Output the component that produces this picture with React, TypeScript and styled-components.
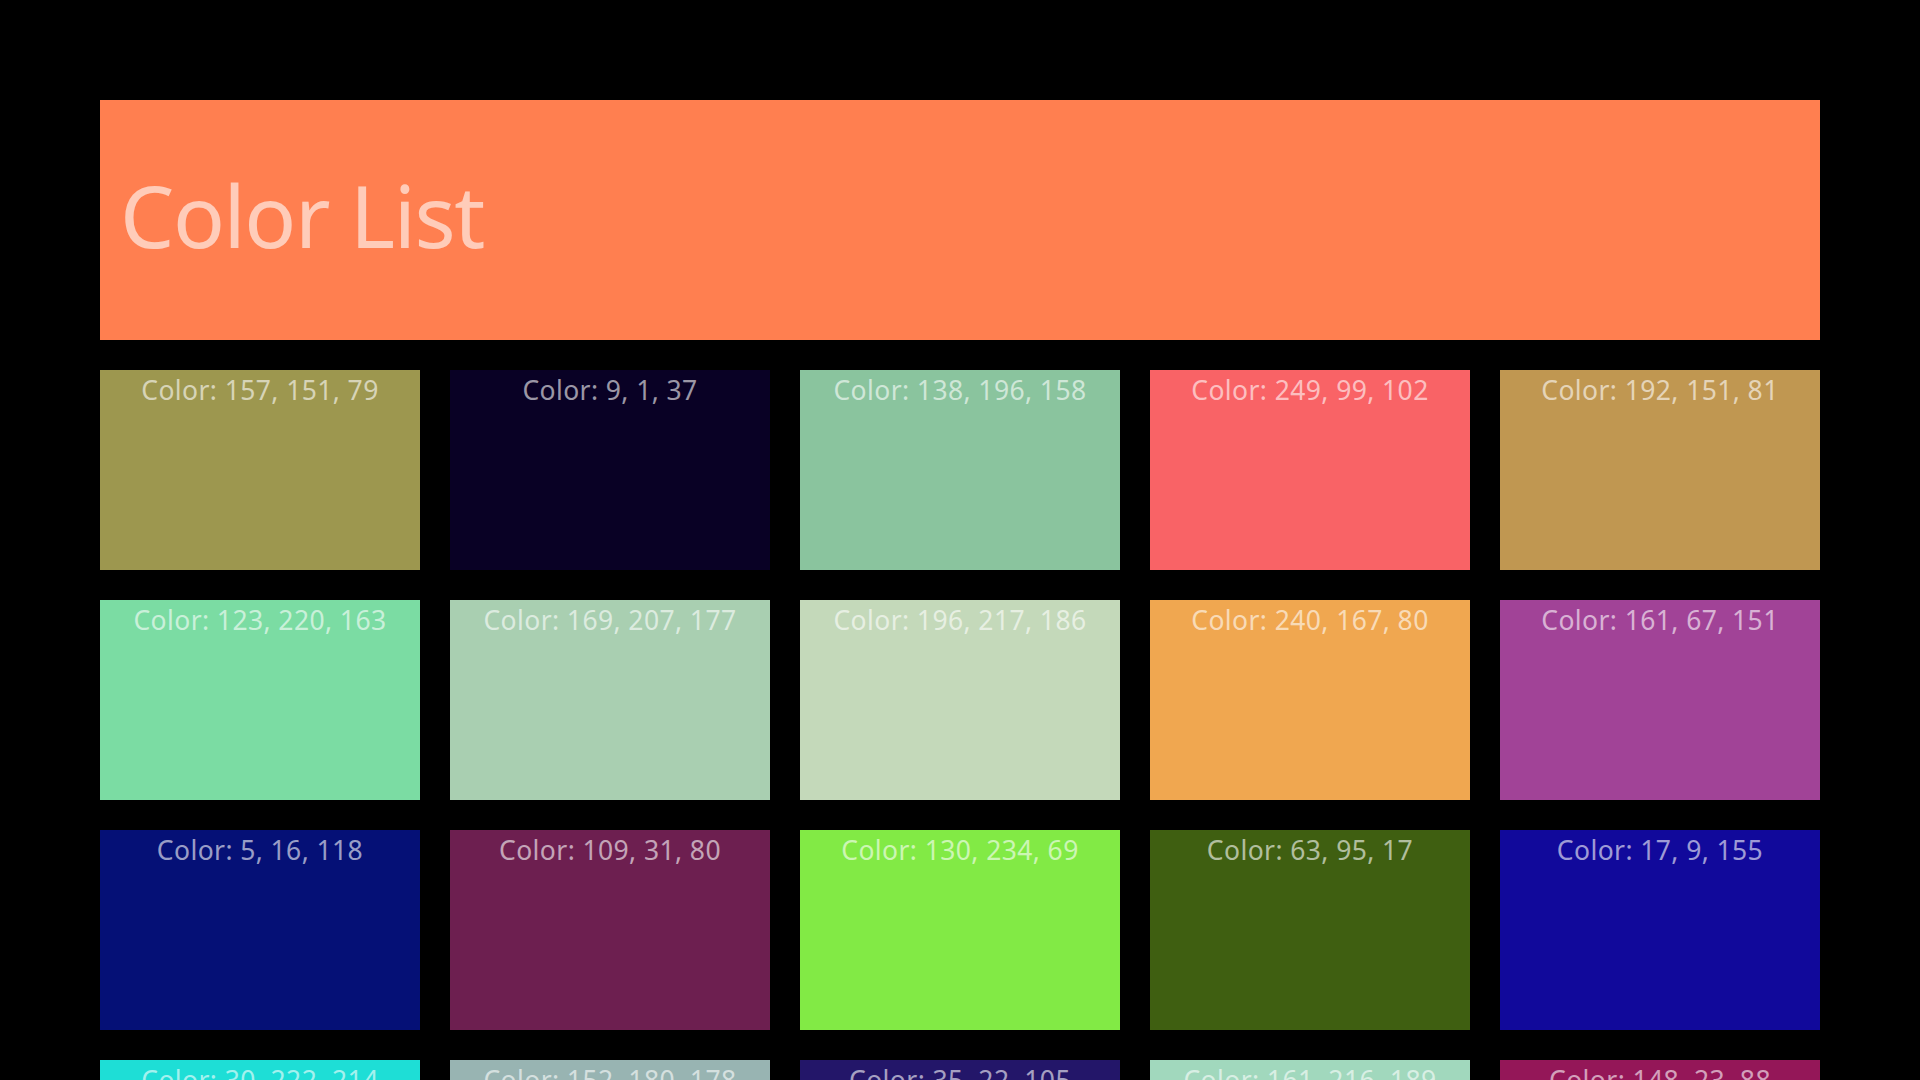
import React from "react";
import styled, { createGlobalStyle } from "styled-components";

const colors: [number, number, number][] = [
  [157, 151, 79],
  [9, 1, 37],
  [138, 196, 158],
  [249, 99, 102],
  [192, 151, 81],
  [123, 220, 163],
  [169, 207, 177],
  [196, 217, 186],
  [240, 167, 80],
  [161, 67, 151],
  [5, 16, 118],
  [109, 31, 80],
  [130, 234, 69],
  [63, 95, 17],
  [17, 9, 155],
  [30, 222, 214],
  [152, 180, 178],
  [35, 22, 105],
  [161, 216, 189],
  [148, 23, 88],
];

function App() {
  return (
    <>
      <GlobalStyle />
      <Page>
        <Header>
          <Title>Color List</Title>
        </Header>
        <Grid>
          {colors.map(([r, g, b], i) => (
            <Swatch key={i} $rgb={`rgb(${r}, ${g}, ${b})`}>
              <Label>
                Color: {r}, {g}, {b}
              </Label>
            </Swatch>
          ))}
        </Grid>
      </Page>
    </>
  );
}

const GlobalStyle = createGlobalStyle`
  body {
    margin: 0;
    background: #000;
    font-family: "Noto Sans", "Open Sans", sans-serif;
  }
`;

const Page = styled.main`
  padding: 100px;
  display: flex;
  flex-direction: column;
  gap: 30px;
`;

const Header = styled.header`
  height: 240px;
  background-color: #ff7f50;
  display: flex;
  align-items: center;
  padding: 0 20px 10px;
  box-sizing: border-box;
`;

const Title = styled.h1`
  margin: 0;
  font-size: 86px;
  font-weight: 400;
  letter-spacing: -1.4px;
  line-height: 1.2;
  color: rgba(255, 255, 255, 0.6);
`;

const Grid = styled.section`
  display: grid;
  grid-template-columns: repeat(5, 320px);
  grid-auto-rows: 200px;
  gap: 30px;
`;

const Swatch = styled.div<{ $rgb: string }>`
  background-color: ${(p) => p.$rgb};
  display: flex;
  justify-content: center;
  align-items: flex-start;
`;

const Label = styled.span`
  margin-top: 5px;
  font-size: 26.5px;
  letter-spacing: 0.4px;
  line-height: 1.2;
  color: rgba(255, 255, 255, 0.6);
`;

export default App;
